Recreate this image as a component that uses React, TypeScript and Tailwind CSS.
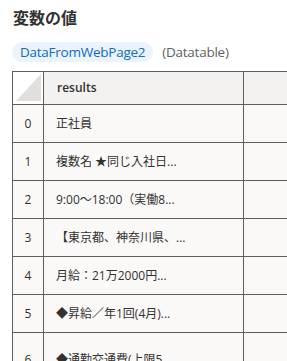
import React from "react";

const rows = [
  "正社員",
  "複数名 ★同じ入社日...",
  "9:00〜18:00（実働8...",
  "【東京都、神奈川県、...",
  "月給：21万2000円...",
  "◆昇給／年1回(4月)...",
  "◆通勤交通費(上限5...",
];

export default function App() {
  return (
    <div className="w-[287px] h-[361px] overflow-hidden bg-white font-['Segoe_UI','Open_Sans','Noto_Sans_CJK_JP',sans-serif] text-[#323130]">
      <div className="pl-[13px] pt-[6px] leading-[24px] text-[16px] font-bold">変数の値</div>
      <div className="mt-[12px] ml-[12px] flex items-center h-[20px]">
        <span className="h-[20px] rounded-full bg-[#ebf3fc] text-[#0f6cbd] px-[8px] text-[13.5px] tracking-[-0.25px] leading-[20px] whitespace-nowrap">
          DataFromWebPage2
        </span>
        <span className="ml-[9px] text-[13.5px] tracking-[-0.25px] leading-[20px] text-[#616161] whitespace-nowrap">(Datatable)</span>
      </div>
      <div className="mt-[9px] ml-[12px] w-[340px] bg-[#605e5c] p-px">
        <div className="grid grid-cols-[30px_199px_108px] gap-px">
          <div className="h-[32px] bg-white relative">
            <svg className="absolute left-[3px] top-[2px]" width="25" height="27" viewBox="0 0 25 27">
              <polygon points="25,0 25,27 0,27" fill="#e1dfdd" />
            </svg>
          </div>
          <div className="h-[32px] bg-[#f3f2f1] pl-[13px] flex items-center text-[12px] font-semibold">results</div>
          <div className="h-[32px] bg-[#f3f2f1]" />
          {rows.map((r, i) => {
            const last = i === rows.length - 1;
            const align = last ? "items-start pt-[18px]" : "items-center";
            return (
              <React.Fragment key={i}>
                <div className={`h-[37px] bg-[#faf9f8] flex justify-center text-[12px] ${align}`}>{i}</div>
                <div className={`h-[37px] bg-[#faf9f8] pl-[12px] flex text-[12px] whitespace-nowrap overflow-hidden ${align}`}>{r}</div>
                <div className="h-[37px] bg-[#faf9f8]" />
              </React.Fragment>
            );
          })}
        </div>
      </div>
    </div>
  );
}
